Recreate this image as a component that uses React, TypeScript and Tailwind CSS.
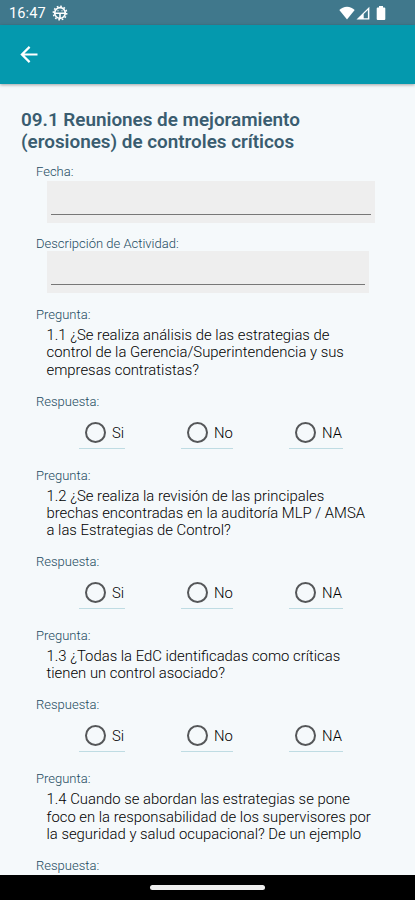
const questions = [
    { id: 1, lines: ['1.1 ¿Se realiza análisis de las estrategias de', 'control de la Gerencia/Superintendencia y sus', 'empresas contratistas?'] },
    { id: 2, lines: ['1.2 ¿Se realiza la revisión de las principales', 'brechas encontradas en la auditoría MLP / AMSA', 'a las Estrategias de Control?'] },
    { id: 3, lines: ['1.3 ¿Todas la EdC identificadas como críticas', 'tienen un control asociado?'] },
    { id: 4, lines: ['1.4 Cuando se abordan las estrategias se pone', 'foco en la responsabilidad de los supervisores por', 'la seguridad y salud ocupacional? De un ejemplo'] },
]

const options = [
    { label: 'Si', className: 'w-[46px]' },
    { label: 'No', className: 'ml-14 w-[52px]' },
    { label: 'NA', className: 'ml-14 w-[54px]' },
]

const StatusBar = () => (
    <div className="flex h-[25px] shrink-0 items-center bg-[#40788c] pl-[9px] text-white">
        <span className="mt-px w-[37px] whitespace-nowrap text-[14.6px] leading-none tracking-[0.1px]">16:47</span>
        <svg className="ml-[6px]" width="16" height="16" viewBox="0 0 16 16" fill="none" stroke="currentColor">
            <circle cx="8" cy="8" r="5.3" strokeWidth="1.7" />
            <circle cx="8" cy="8" r="6.7" strokeWidth="1.5" strokeDasharray="1.7 1.808" />
            <path d="M3 8.2h10M8 8v5" strokeWidth="1.6" />
            <path d="M5.4 5.8h1.2M9.4 5.8h1.2" strokeWidth="1" />
        </svg>
        <svg className="ml-auto" width="16" height="14" viewBox="0 0 16 14" fill="currentColor">
            <path d="M8 13.6.3 4.1C2.3 2.2 5 .7 8 .7s5.7 1.5 7.7 3.4z" />
        </svg>
        <svg className="ml-px" width="14" height="14" viewBox="0 0 14 14">
            <path d="M13.4.7v12.9H.5z" fill="currentColor" />
            <path d="M7.7 8 11.9 3.9v8.4H7.7z" fill="#40788c" />
        </svg>
        <svg className="ml-[6px] mr-[29px]" width="10" height="14" viewBox="0 0 10 14" fill="currentColor">
            <path d="M3 0h4v1.5h1.3q1 0 1 1V13q0 1-1 1H1.7q-1 0-1-1V2.5q0-1 1-1H3z" />
        </svg>
    </div>
)

const AppBar = () => (
    <header className="z-10 flex h-[59px] shrink-0 items-center bg-[#0499ae] pl-5 text-white shadow-[0_1px_3px_rgba(0,0,0,0.35)]">
        <button aria-label="Volver">
            <svg width="18" height="18" viewBox="0 0 18 18" fill="none" stroke="currentColor" strokeWidth="2.2">
                <path d="M17.5 8.5H2M9.6.9 1.9 8.5l7.7 7.6" />
            </svg>
        </button>
    </header>
)

const Label = ({ children }: { children: string }) => (
    <div className="h-[15px] text-[13px] font-light leading-[15px] text-[#234a60]">{children}</div>
)

const Respuesta = () => (
    <div className="ml-[42.5px] mt-[9px] flex">
        {options.map((option) => (
            <label key={option.label} className={`flex h-[31px] items-start border-b border-[#bfdce3] pl-[6px] ${option.className}`}>
                <span className="mt-[4px] size-[21px] shrink-0 rounded-full border-2 border-[#555759]" />
                <span className="ml-[6.5px] mt-[7px] text-[14.8px] font-light leading-[17px] text-black">{option.label}</span>
            </label>
        ))}
    </div>
)

export default function App() {
    return (
        <div className="flex h-[900px] w-[415px] flex-col overflow-hidden bg-[#f5f9fb] font-['Roboto',sans-serif]">
            <StatusBar />
            <AppBar />

            <main className="min-h-0 flex-1 overflow-hidden pt-[24.5px]">
                <h1 className="whitespace-nowrap pl-[21px] text-[18.9px] font-semibold leading-[22.5px] tracking-[-0.02px] text-[#3a5d70]">
                    09.1 Reuniones de mejoramiento<br />(erosiones) de controles críticos
                </h1>

                <div className="pl-9 pt-[10.5px]">
                    <Label>Fecha:</Label>
                    <div className="ml-[10.5px] mt-[2px] h-[42px] w-[328px] bg-[#eeeeee] px-1 pt-[33px]">
                        <div className="h-px bg-[#777777]" />
                    </div>

                    <div className="pt-[13px]">
                        <Label>Descripción de Actividad:</Label>
                        <div className="ml-[10.5px] h-[42px] w-[322px] bg-[#eeeeee] px-1 pt-[33px]">
                            <div className="h-px bg-[#777777]" />
                        </div>
                    </div>

                    <div className="flex flex-col gap-[19px] pt-[14px]">
                        {questions.map((question, index) => (
                            <section key={question.id}>
                                <Label>Pregunta:</Label>
                                <div className="mb-[14.5px] ml-[10.5px] mt-[5px] text-[14.85px] font-light leading-[17.35px] text-black">
                                    {question.lines.map((line) => (
                                        <p key={line} className="whitespace-nowrap">{line}</p>
                                    ))}
                                </div>
                                <Label>Respuesta:</Label>
                                {index < questions.length - 1 && <Respuesta />}
                            </section>
                        ))}
                    </div>
                </div>
            </main>

            <div className="flex h-[25px] shrink-0 items-center justify-center bg-black">
                <div className="h-[5px] w-[115px] rounded-full bg-[#eeeeee]" />
            </div>
        </div>
    )
}
